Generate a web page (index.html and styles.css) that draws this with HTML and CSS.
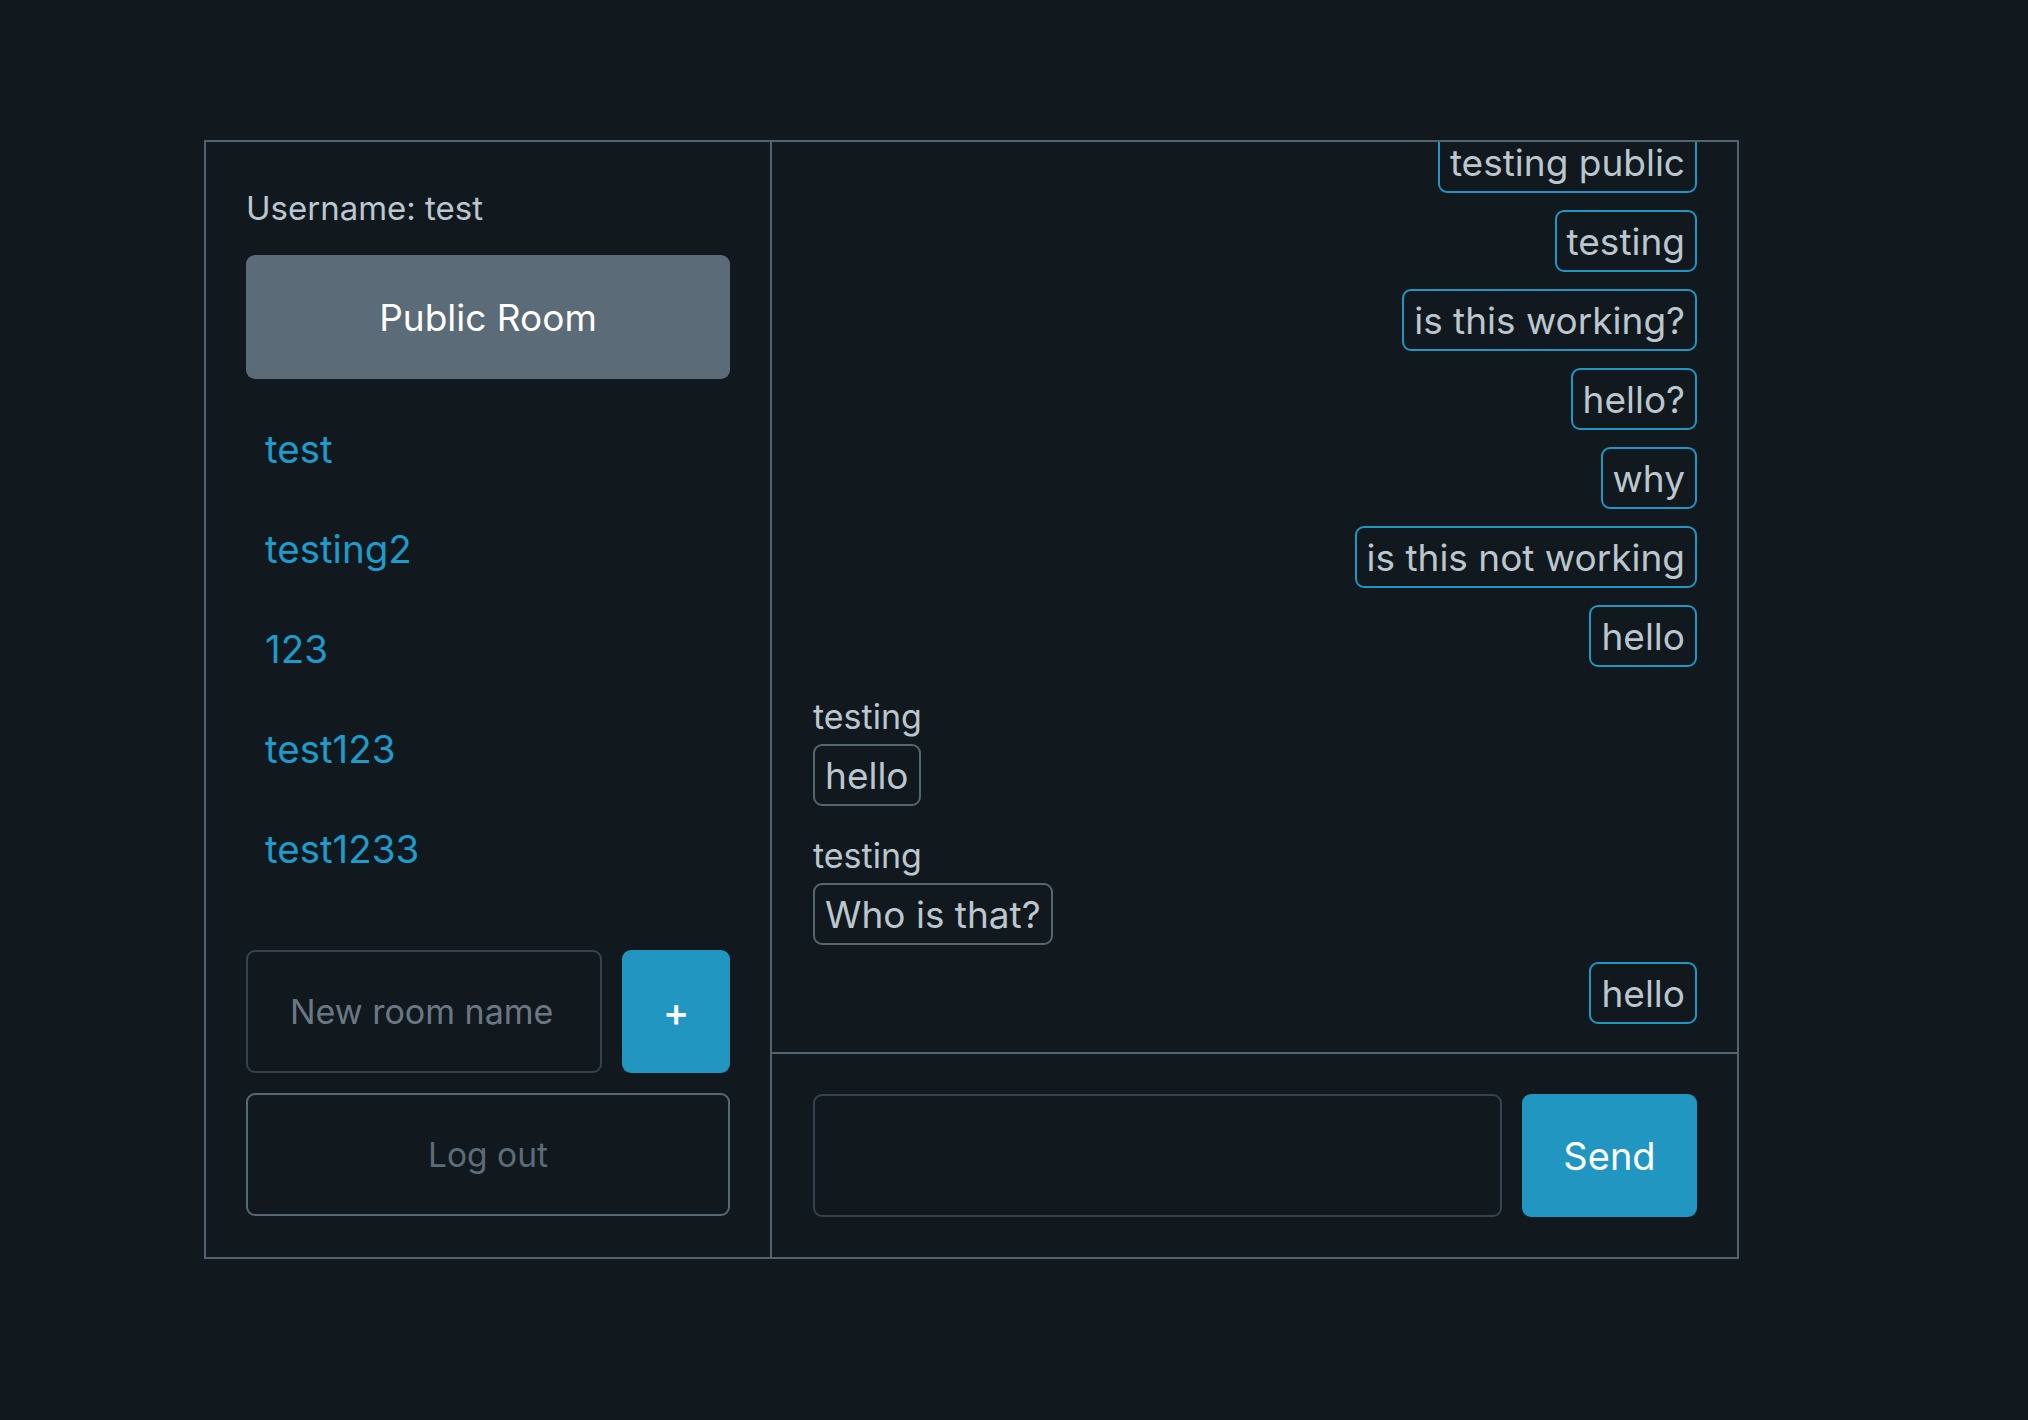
FILE: index.html
```
<!DOCTYPE html>
<html lang="en">
<head>
<meta charset="utf-8">
<title>Chat</title>
<link rel="stylesheet" href="styles.css">
</head>
<body>
<main class="app">
  <aside class="sidebar">
    <div class="username">Username: test</div>
    <button class="room-active">Public Room</button>
    <ul class="rooms">
      <li><a href="#">test</a></li>
      <li><a href="#">testing2</a></li>
      <li><a href="#">123</a></li>
      <li><a href="#">test123</a></li>
      <li><a href="#">test1233</a></li>
    </ul>
    <div class="new-room">
      <input class="field" type="text" placeholder="New room name">
      <button class="btn-primary plus">+</button>
    </div>
    <button class="logout">Log out</button>
  </aside>
  <section class="chat">
    <div class="messages">
      <div class="bubble mine">testing public</div>
      <div class="bubble mine">testing</div>
      <div class="bubble mine">is this working?</div>
      <div class="bubble mine">hello?</div>
      <div class="bubble mine">why</div>
      <div class="bubble mine">is this not working</div>
      <div class="bubble mine">hello</div>
      <div class="theirs">
        <div class="author">testing</div>
        <div class="bubble other">hello</div>
      </div>
      <div class="theirs">
        <div class="author">testing</div>
        <div class="bubble other">Who is that?</div>
      </div>
      <div class="bubble mine">hello</div>
    </div>
    <div class="composer">
      <input class="field composer-input" type="text">
      <button class="btn-primary send">Send</button>
    </div>
  </section>
</main>
</body>
</html>
```
FILE: styles.css
```
* { box-sizing: border-box; }

html, body {
  margin: 0;
  padding: 0;
  background: #11191f;
}

body {
  font-family: Inter, "Noto Sans", "Liberation Sans", sans-serif;
  color: #bbc6ce;
  padding: 140px 0 0 204px;
}

.app {
  width: 1535px;
  height: 1119px;
  border: 2px solid #52636f;
  display: flex;
}

.sidebar {
  width: 566px;
  flex: none;
  border-right: 2px solid #52636f;
  padding: 41px 40px 0 40px;
  display: flex;
  flex-direction: column;
}

.username {
  font-size: 33px;
  line-height: 51px;
}

.room-active {
  margin-top: 21px;
  width: 100%;
  height: 124px;
  border: none;
  border-radius: 9px;
  background: #5b6b78;
  color: #ffffff;
  font-family: inherit;
  font-size: 37px;
  line-height: 57px;
  padding: 0;
}

.rooms {
  list-style: none;
  margin: 20px 0 0 0;
  padding: 0;
}

.rooms li {
  height: 100px;
  line-height: 100px;
  font-size: 38.5px;
  padding-left: 19px;
}

.rooms a {
  color: #1d9bca;
  text-decoration: none;
}

.new-room {
  margin-top: 51px;
  display: flex;
  gap: 20px;
}

.field {
  font-family: inherit;
  font-size: 34px;
  line-height: 51px;
  height: 123px;
  padding: 0 42px;
  background: #11191f;
  border: 2px solid #34434e;
  border-radius: 9px;
  color: #bbc6ce;
  outline: none;
  min-width: 0;
}

.field::placeholder {
  color: #6b7883;
}

.new-room .field {
  flex: 1;
}

.btn-primary {
  border: none;
  border-radius: 9px;
  background: #2096c1;
  color: #ffffff;
  font-family: inherit;
  padding: 0;
}

.plus {
  width: 108px;
  height: 123px;
  flex: none;
  font-size: 40px;
  font-weight: 500;
}

.logout {
  margin-top: 20px;
  width: 100%;
  height: 123px;
  background: transparent;
  border: 2px solid #566874;
  border-radius: 9px;
  color: #5c6c78;
  font-family: inherit;
  font-size: 33.5px;
}

.chat {
  flex: 1;
  min-width: 0;
  display: flex;
  flex-direction: column;
}

.messages {
  flex: 1;
  min-height: 0;
  overflow: hidden;
  display: flex;
  flex-direction: column;
  justify-content: flex-end;
  gap: 17px;
  padding: 0 40px 28px 41px;
}

.bubble {
  flex: none;
  font-size: 37px;
  line-height: 57px;
  padding: 1px 10px 0 10px;
  border: 2px solid #1f96c4;
  border-radius: 9px;
  color: #bbc6ce;
  white-space: nowrap;
}

.mine {
  align-self: flex-end;
}

.theirs {
  flex: none;
  align-self: flex-start;
  display: flex;
  flex-direction: column;
  align-items: flex-start;
}

.author {
  font-size: 34px;
  line-height: 51px;
  margin: 7px 0 2px 0;
}

.bubble.other {
  border-color: #56666f;
}

.composer {
  flex: none;
  border-top: 2px solid #52636f;
  padding: 40px 40px 40px 41px;
  display: flex;
  gap: 20px;
}

.composer-input {
  flex: 1;
}

.send {
  width: 175px;
  height: 123px;
  flex: none;
  font-size: 38px;
}
```
